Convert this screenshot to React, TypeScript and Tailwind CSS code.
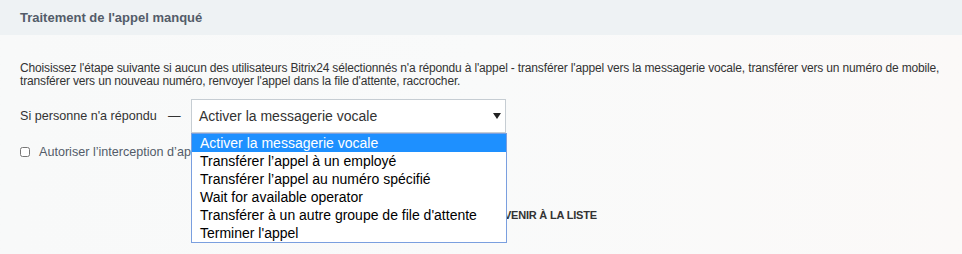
import { useState } from "react";

const OPTIONS = [
  "Activer la messagerie vocale",
  "Transférer l’appel à un employé",
  "Transférer l’appel au numéro spécifié",
  "Wait for available operator",
  "Transférer à un autre groupe de file d'attente",
  "Terminer l'appel",
];

export default function App() {
  const [selected] = useState(0);

  return (
    <div className="w-[962px] h-[254px] overflow-hidden bg-gradient-to-r from-[#f8f9f9] via-[#f9fafa] to-[#fbf9f8] font-['Liberation_Sans',Arial,sans-serif]">
      <div className="h-[35px] bg-[#eef2f4] px-5 flex items-center">
        <h2 className="text-[13px] font-bold text-[#535c69]">
          Traitement de l'appel manqué
        </h2>
      </div>

      <div className="px-5 pt-[27px]">
        <p className="text-[12px] leading-[13px] tracking-[-0.16px] text-[#333] whitespace-nowrap">
          Choisissez l'étape suivante si aucun des utilisateurs Bitrix24 sélectionnés n'a répondu à l'appel - transférer l'appel vers la messagerie vocale, transférer vers un numéro de mobile,
          <br />
          transférer vers un nouveau numéro, renvoyer l'appel dans la file d'attente, raccrocher.
        </p>

        <div className="mt-[11px] flex items-center h-[34px]">
          <span className="text-[12.6px] text-[#333] w-[148px]">Si personne n'a répondu</span>
          <span className="text-[12.6px] text-[#333] w-[23px]">—</span>
          <div className="relative">
            <div className="w-[315px] h-[34px] border border-[#c6cdd3] bg-white flex items-center pl-[7px] pr-[5px] justify-between">
              <span className="text-[14px] text-[#333]">{OPTIONS[selected]}</span>
              <svg width="8" height="6" viewBox="0 0 8 6" className="mr-[-1px]">
                <path d="M0 0h8L4 6z" fill="#222" />
              </svg>
            </div>
            <ul className="absolute left-0 top-[34px] w-[316px] bg-white border border-[#7a9fdf] z-10">
              {OPTIONS.map((o, i) => (
                <li
                  key={o}
                  className={
                    i === selected
                      ? "h-[18px] leading-[18px] pl-[8px] text-[14px] bg-[#1e90ff] text-white"
                      : "h-[18px] leading-[18px] pl-[8px] text-[14px] text-black"
                  }
                >
                  {o}
                </li>
              ))}
            </ul>
          </div>
        </div>

        <label className="mt-[12px] flex items-center h-[14px]">
          <input type="checkbox" className="w-[10px] h-[10px] m-0 accent-[#888]" />
          <span className="ml-[9px] text-[12.6px] text-[#535c69]">
            Autoriser l’interception d’appels
          </span>
        </label>

        <div className="mt-[40px] flex items-center h-[32px] pl-[469px]">
          <button className="text-[11px] font-bold uppercase tracking-[-0.2px] text-[#333]">
            Revenir à la liste
          </button>
        </div>
      </div>
    </div>
  );
}
